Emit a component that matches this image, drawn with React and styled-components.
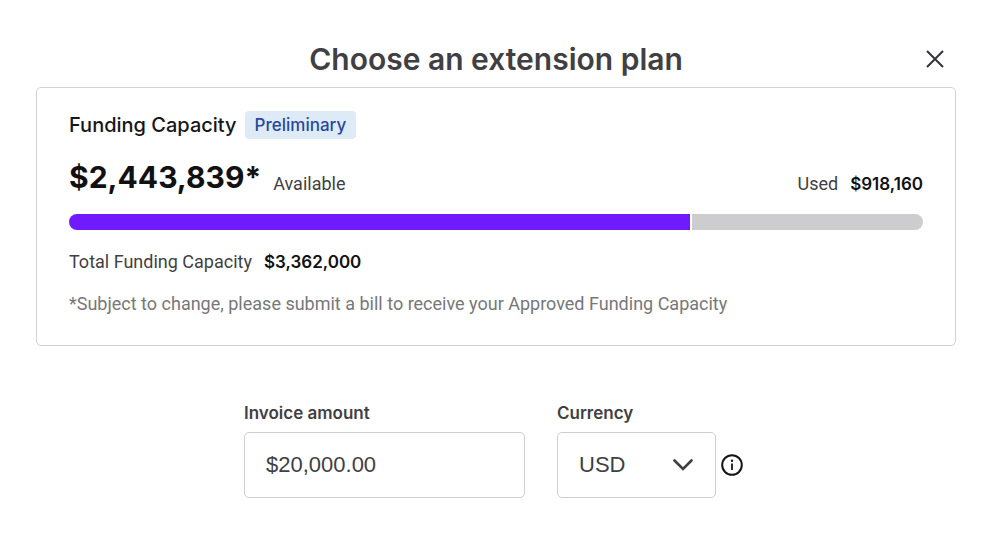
import React, { useState } from "react";
import styled, { createGlobalStyle } from "styled-components";

const GlobalStyle = createGlobalStyle`
  * {
    box-sizing: border-box;
  }
  body {
    margin: 0;
    background: #fff;
    color: #3f3f44;
    font-family: "Liberation Sans", Arial, sans-serif;
    font-size: 18px;
    line-height: 24px;
  }
  h1, h2, strong, label {
    font-family: Inter, "Liberation Sans", sans-serif;
  }
`;

const Page = styled.main`
  padding: 39px 35px 40px 36px;
`;

const Header = styled.header`
  display: grid;
  grid-template-columns: 42px 1fr 42px;
  align-items: center;
  margin-bottom: 8px;
`;

const Title = styled.h1`
  grid-column: 2;
  margin: 0;
  font-size: 30px;
  font-weight: 600;
  line-height: 40px;
  text-align: center;
`;

const CloseButton = styled.button`
  display: flex;
  align-items: center;
  justify-content: center;
  height: 40px;
  padding: 0;
  border: 0;
  background: none;
  color: #333338;
  cursor: pointer;
`;

const Card = styled.section`
  padding: 22px 32px 29px;
  border: 1px solid #d2d2d4;
  border-radius: 5px;
`;

const CardHeader = styled.div`
  display: flex;
  align-items: center;
  gap: 8px;
`;

const CardTitle = styled.h2`
  margin: 0;
  color: #161618;
  font-size: 20px;
  font-weight: 500;
  line-height: 30px;
`;

const Badge = styled.span`
  padding: 2px 10px;
  border-radius: 4px;
  background: #dfeaf7;
  color: #26499d;
  font-family: Inter, "Liberation Sans", sans-serif;
  font-size: 17px;
  font-weight: 500;
`;

const Amounts = styled.div`
  display: flex;
  align-items: flex-end;
  justify-content: space-between;
  margin: 18px 0;
`;

const Pair = styled.div`
  display: flex;
  align-items: flex-end;
  gap: 12px;
`;

const Caption = styled.span`
  font-family: Roboto, "Liberation Sans", sans-serif;
`;

const Available = styled.strong`
  color: #111113;
  font-size: 30px;
  font-weight: 700;
  line-height: 38px;
`;

const Value = styled.strong`
  color: #111113;
  font-size: 17px;
  font-weight: 600;
`;

const Bar = styled.div`
  display: flex;
  gap: 2px;
  height: 16px;
  margin-bottom: 20px;
  border-radius: 8px;
  background: #fff;
  overflow: hidden;
`;

const Filled = styled.div`
  flex: none;
  background: #701aff;
`;

const Rest = styled.div`
  flex: 1;
  background: #cdcdcf;
`;

const Note = styled.p`
  margin: 18px 0 0;
  color: #77777a;
  font-family: Roboto, "Liberation Sans", sans-serif;
`;

const Form = styled.form`
  display: flex;
  gap: 32px;
  max-width: 504px;
  margin: 55px auto 0;
`;

const Field = styled.div`
  display: flex;
  flex-direction: column;
  gap: 7px;
  min-width: 0;
  flex: ${props => (props.$grow ? "1" : "none")};
`;

const Label = styled.label`
  font-size: 17px;
  font-weight: 600;
`;

const Input = styled.input`
  width: 100%;
  height: 66px;
  padding: 0 21px;
  border: 1px solid #cfcfd2;
  border-radius: 5px;
  background: #fff;
  color: #3f3f44;
  font: inherit;
  font-size: 22px;
`;

const Control = styled.div`
  display: flex;
  align-items: center;
`;

const SelectBox = styled.div`
  display: grid;
  align-items: center;

  > * {
    grid-area: 1 / 1;
  }
  > svg {
    justify-self: end;
    margin-right: 23px;
    pointer-events: none;
  }
`;

const Select = styled(Input)`
  width: 159px;
  appearance: none;
`;

const InfoButton = styled.button`
  display: flex;
  padding: 0 5px;
  border: 0;
  background: none;
  color: #161618;
`;

const available = 2443839;
const used = 918160;

const money = value => `$${value.toLocaleString("en-US")}`;

const CloseIcon = () => (
  <svg width="18" height="18" viewBox="0 0 18 18" fill="none" stroke="currentColor" strokeWidth="2" aria-hidden="true">
    <path d="M1 1l16 16M17 1L1 17" />
  </svg>
);

const ChevronIcon = () => (
  <svg width="20" height="12" viewBox="0 0 20 12" fill="none" stroke="#3f3f44" strokeWidth="2.6" strokeLinecap="round" aria-hidden="true">
    <path d="M1.500 1.500L10 10l8.500-8.500" />
  </svg>
);

const InfoIcon = () => (
  <svg width="22" height="22" viewBox="0 0 22 22" fill="none" stroke="currentColor" aria-hidden="true">
    <circle cx="11" cy="11" r="9.800" strokeWidth="2" />
    <path d="M11 9.500V16" strokeWidth="1.800" />
    <circle cx="11" cy="6.700" r="1.200" fill="currentColor" stroke="none" />
  </svg>
);

export default () => {
  const [amount, setAmount] = useState("$20,000.00");
  const [currency, setCurrency] = useState("USD");

  return (
    <Page>
      <GlobalStyle />
      <Header>
        <Title>Choose an extension plan</Title>
        <CloseButton type="button" aria-label="Close">
          <CloseIcon />
        </CloseButton>
      </Header>
      <Card>
        <CardHeader>
          <CardTitle>Funding Capacity</CardTitle>
          <Badge>Preliminary</Badge>
        </CardHeader>
        <Amounts>
          <Pair>
            <Available>{money(available)}*</Available>
            <Caption>Available</Caption>
          </Pair>
          <Pair>
            <Caption>Used</Caption>
            <Value>{money(used)}</Value>
          </Pair>
        </Amounts>
        <Bar>
          <Filled style={{ width: `${(available / (available + used)) * 100}%` }} />
          <Rest />
        </Bar>
        <Pair>
          <Caption>Total Funding Capacity</Caption>
          <Value>{money(3362000)}</Value>
        </Pair>
        <Note>*Subject to change, please submit a bill to receive your Approved Funding Capacity</Note>
      </Card>
      <Form>
        <Field $grow>
          <Label htmlFor="amount">Invoice amount</Label>
          <Input id="amount" value={amount} onChange={e => setAmount(e.target.value)} />
        </Field>
        <Field>
          <Label htmlFor="currency">Currency</Label>
          <Control>
            <SelectBox>
              <Select as="select" id="currency" value={currency} onChange={e => setCurrency(e.target.value)}>
                <option>USD</option>
                <option>EUR</option>
                <option>GBP</option>
              </Select>
              <ChevronIcon />
            </SelectBox>
            <InfoButton type="button" aria-label="About currency">
              <InfoIcon />
            </InfoButton>
          </Control>
        </Field>
      </Form>
    </Page>
  );
};
